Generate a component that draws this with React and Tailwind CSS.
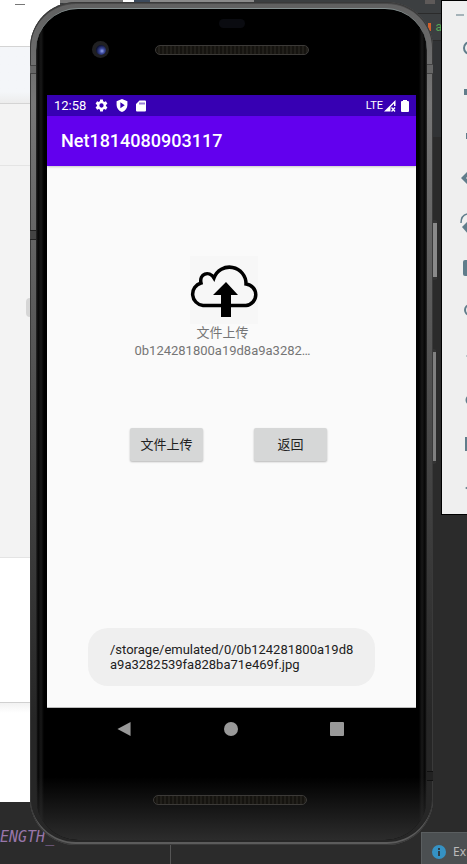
import React from "react";

function Desktop() {
  return (
    <div className="absolute inset-0 flex flex-col" aria-hidden="true">
      <div className="flex h-[802px] w-full">
        <div className="flex w-[60px] shrink-0 flex-col bg-white">
          <div className="h-[46px] bg-white pt-1 pl-[15px]">
            <div className="h-px w-[10px] bg-[#777]" />
          </div>
          <div className="h-[58px] border-y border-[#d4d4d4] bg-linear-to-b from-[#f4f6f9] from-80% to-[#ececec]" />
          <div className="h-[62px] border-b border-[#e4e4e4] bg-[#f3f3f3]" />
          <div className="flex h-[392px] flex-col border-b border-[#e4e4e4] bg-[#f3f3f3] pt-[132px] pl-[26px]">
            <div className="h-[19px] w-3 rounded-sm bg-[#d6d6d6]" />
          </div>
          <div className="h-[145px] border-b border-[#d0d0d0] bg-white" />
          <div className="grow bg-linear-to-b from-[#f2f2f2] to-white to-10%" />
        </div>
        <div className="flex grow flex-col bg-[#2b2b2b]">
          <div className="flex h-[13px] bg-[#3c3f41]">
            <div className="h-[3px] w-[63px] bg-[#777]" />
            <div className="h-[3px] w-[11px] bg-white" />
            <div className="h-[3px] w-[16px] bg-[#3c4a5c]" />
            <div className="h-[3px] w-[104px] bg-[#8a8a8a]" />
            <div className="ml-auto h-[4px] w-[10px] bg-[#5e5a59]" />
            <div className="w-[32px]" />
          </div>
          <div className="flex h-7 items-center justify-end border-y border-[#2b2b2b] bg-[#3c3f41] pr-[25px] font-[Roboto,sans-serif] text-[12px] leading-[14px] text-[#57a657]">
            <div className="mr-[4px] h-[8px] w-[3px] bg-[#d2602a]" />
            a
          </div>
          <div className="h-24 bg-[#313335]" />
        </div>
      </div>
      <div className="flex grow items-stretch bg-[#2b2b2b]">
        <div className="w-[171px] border-r border-[#555] pt-[22px]">
          <span className="font-['DejaVu_Sans_Mono',monospace] text-[15px] leading-[18px] text-[#9876aa] italic">ENGTH_</span>
        </div>
        <div className="ml-auto flex h-[32px] w-[46px] items-center gap-[7px] self-end border-t border-l border-[#5a5e60] bg-[#4b4f51] pt-[6px] pl-[10px]">
          <svg className="size-[14px] shrink-0" viewBox="0 0 14 14">
            <circle cx="7" cy="7" r="7" fill="#3592c4" />
            <path d="M6 3h2v2H6zm0 3h2v5H6z" fill="#2f3d46" />
          </svg>
          <span className="font-['Noto_Sans',sans-serif] text-[12px] leading-[16px] text-[#bbb]">Ex</span>
        </div>
      </div>
    </div>
  );
}

function StatusBar() {
  return (
    <div className="flex h-[21px] items-center bg-[#3700b3] px-[7px] text-white">
      <span className="text-[13px] leading-[15px]">12:58</span>
      <svg className="ml-[9px] size-[13px]" viewBox="1 1 22 22" fill="currentColor" aria-hidden="true">
        <path
          fillRule="evenodd"
          d="M19.400 13c.1-.3.1-.7.1-1s0-.7-.1-1l2.600-2-2.500-4.300-3 1.200c-.5-.4-1.100-.7-1.700-1L14.300 1.700H9.700L9.200 4.900c-.6.3-1.200.6-1.700 1l-3-1.200L2 9l2.600 2c-.1.300-.1.700-.1 1s0 .7.1 1L2 15l2.500 4.300 3-1.200c.5.4 1.100.7 1.700 1l.5 3.200h4.600l.5-3.200c.6-.3 1.200-.6 1.700-1l3 1.200L22 15zM12 15.600a3.600 3.600 0 1 1 0-7.200 3.600 3.600 0 0 1 0 7.200z"
        />
      </svg>
      <svg className="ml-2 h-[13px] w-[12px]" viewBox="0 0 22 24" fill="currentColor" fillRule="evenodd" aria-hidden="true">
        <path d="M11 0 21 4v7c0 6-4 11-10 13C5 22 1 17 1 11V4zM8 6v11l8-5.500z" />
      </svg>
      <svg className="ml-2 h-[12px] w-[10px]" viewBox="0 0 20 24" fill="currentColor" fillRule="evenodd" aria-hidden="true">
        <path d="M7 1h11q2 0 2 2v18q0 2-2 2H2q-2 0-2-2V8zM7 5v4h2V5zm4 0v4h2V5zm4 0v4h2V5z" />
      </svg>
      <span className="ml-auto text-[11px] leading-[14px]">LTE</span>
      <svg className="ml-px size-[12px]" viewBox="0 0 24 24" fill="currentColor" aria-hidden="true">
        <path d="M0 23 23 0v12h-3V7L13 14v9z" />
        <path d="m15 15 7 8m0-8-7 8" stroke="currentColor" strokeWidth="2.500" />
      </svg>
      <svg className="ml-[5px] h-[12px] w-[8px]" viewBox="0 0 8 12" fill="currentColor" aria-hidden="true">
        <path d="M2 0h4v1h1q1 0 1 1v9q0 1-1 1H1q-1 0-1-1V2q0-1 1-1h1z" />
      </svg>
    </div>
  );
}

function UploadIcon() {
  return (
    <svg className="size-[68px] bg-[#f7f7f7]" viewBox="0 0 68 68" role="img" aria-label="上传">
      <path
        d="M13 49.500A11.500 11.500 0 0 1 11 27C9 18 19 14 24 22A16.500 16.500 0 0 1 56 28A10.800 10.800 0 0 1 56 49.500Z"
        fill="none"
        stroke="#000"
        strokeWidth="3.500"
      />
      <path d="M36 26 48 39H41V61H31V39H23Z" fill="#000" />
    </svg>
  );
}

function Speaker() {
  return (
    <div className="h-[10px] w-[154px] rounded-full border border-[#3c3a38] bg-[repeating-linear-gradient(90deg,#15130f_0px,#15130f_2px,#211f1a_2px,#211f1a_4px)]" />
  );
}

function AppButton({ children }) {
  return (
    <button
      type="button"
      className="h-[33px] w-[73px] rounded-xs bg-[#d6d7d7] text-[13px] leading-[18px] text-[#212121] shadow-[0_1px_2px_#0004]"
    >
      {children}
    </button>
  );
}

function Phone() {
  return (
    <div className="absolute top-[2px] left-[30px] w-[403px] rounded-[46px] bg-linear-to-b from-[#606060] via-[#777] via-12% to-[#262626] to-85% px-[6px] pt-[6px] pb-[5px] font-[Roboto,'Noto_Sans_CJK_SC',sans-serif] shadow-[inset_0_0_0_1px_#3a3a3a,inset_0_-3px_0_#5c5c5c,inset_0_2px_0_#4a4a4a]">
      <div className="absolute top-[63px] left-0 h-[9px] w-[6px] border-y border-[#444] bg-[#666]" />
      <div className="absolute top-[228px] left-0 h-[10px] w-[6px] border-y border-[#222] bg-[#444]" />
      <div className="absolute top-[62px] right-0 h-[10px] w-[6px] border-y border-[#444] bg-[#666]" />
      <div className="absolute top-[769px] right-0 h-[10px] w-[6px] border-y border-[#111] bg-[#222]" />
      <div className="absolute top-[218px] -right-[4px] h-[60px] w-[4px] rounded-r-xs border-y-3 border-[#333] bg-[#8a8a8a]" />
      <div className="absolute top-[347px] -right-[3px] h-[115px] w-[3px] rounded-r-xs border-y-3 border-[#333] bg-[#808080]" />
      <div className="overflow-hidden rounded-[42px] border-t border-[#879292] bg-[linear-gradient(90deg,#2a2a2a_0px,#050505_2px,#181818_5px,#000_8px,#000_calc(100%-8px),#181818_calc(100%-5px),#050505_calc(100%-2px),#2a2a2a_100%)] px-[11px]">
        <div className="flex h-[86px] flex-col items-center">
          <div className="mt-[10px] h-[9px] w-[26px] rounded-full bg-[#0a0b10]" />
          <div className="mt-[13px] flex w-full items-center">
            <div className="ml-[45px] flex size-[17px] items-center justify-center rounded-full bg-[#202022]">
              <div className="size-[10px] rounded-full bg-[radial-gradient(circle_at_60%_60%,#93a5f0_0%,#3a4799_30%,#0c1030_70%)]" />
            </div>
            <div className="ml-[46px]">
              <Speaker />
            </div>
          </div>
        </div>
        <section className="flex flex-col bg-[#fafafa]">
          <StatusBar />
          <header className="flex h-[50px] items-center bg-[#6200ee] px-[14px] shadow-[0_1px_2px_#0003]">
            <h1 className="text-[18px] leading-[22px] font-medium text-white">Net1814080903117</h1>
          </header>
          <div className="flex h-[542px] flex-col items-center border-b border-[#bbb] pt-[90px]">
            <div className="flex flex-col items-center pr-[15px] text-[13px] leading-[18px] text-[#757575]">
              <UploadIcon />
              <div className="flex flex-col items-center pr-[3px]">
                <p>文件上传</p>
                <p>0b124281800a19d8a9a3282…</p>
              </div>
            </div>
            <div className="mt-[68px] flex gap-[51px] pr-[6px]">
              <AppButton>文件上传</AppButton>
              <AppButton>返回</AppButton>
            </div>
            <div
              role="status"
              className="mt-auto mb-[21px] w-[287px] rounded-[20px] bg-[#efefef] px-[22px] py-[14px] text-[13px] leading-[15px] text-[#212121]"
            >
              /storage/emulated/0/0b124281800a19d8
              <br />
              a9a3282539fa828ba71e469f.jpg
            </div>
          </div>
        </section>
        <nav className="flex h-[42px] items-center justify-between pr-[72px] pl-[70px] text-[#999]">
          <button type="button" aria-label="Back">
            <svg className="size-[14px]" viewBox="0 0 14 15" fill="currentColor" aria-hidden="true">
              <path d="M0 7.500 14 0v15z" />
            </svg>
          </button>
          <button type="button" aria-label="Home" className="size-[14px] rounded-full bg-[#999]" />
          <button type="button" aria-label="Recents" className="size-[14px] rounded-[1px] bg-[#999]" />
        </nav>
        <div className="-mx-[11px] flex h-[90px] items-start justify-center bg-linear-to-b from-transparent from-30% to-[#2c2c2c] pt-[45px] pr-[4px]">
          <Speaker />
        </div>
      </div>
    </div>
  );
}

function Toolbar() {
  return (
    <aside className="absolute top-0 right-0 w-[26px] overflow-hidden border border-r-0 border-black bg-[#efefef]">
      <svg className="h-[513px] w-[25px]" viewBox="442 1 25 513" fill="#607d8b" aria-hidden="true">
        <path d="M456 14h8v2h-8z" fill="#a5b3b9" />
        <circle cx="470" cy="48" r="6" fill="none" stroke="#607d8b" strokeWidth="2" />
        <path d="M464 89h4v6h-4zM466 133h2v6h-2z" />
        <path d="m461 178 7-7v5l-2 2 2 2v5z" />
        <path d="M461 223c0-4 2-8 6-9" fill="none" stroke="#607d8b" strokeWidth="1.500" />
        <path d="m462 227 6-6v13z" />
        <path d="M465 260h3v16h-3q-2 0-2-2v-12q0-2 2-2z" />
        <circle cx="470" cy="310" r="5" fill="none" stroke="#607d8b" strokeWidth="2" />
        <path d="M466 355h2v2h-2z" fill="#bcc8cd" />
        <circle cx="471" cy="400" r="5.500" />
        <path d="M465 437h3v14h-3zM465 488l3-2v4z" />
      </svg>
    </aside>
  );
}

export default function App() {
  return (
    <main className="relative min-h-screen w-full overflow-hidden bg-[#2b2b2b]">
      <Desktop />
      <Phone />
      <Toolbar />
    </main>
  );
}
